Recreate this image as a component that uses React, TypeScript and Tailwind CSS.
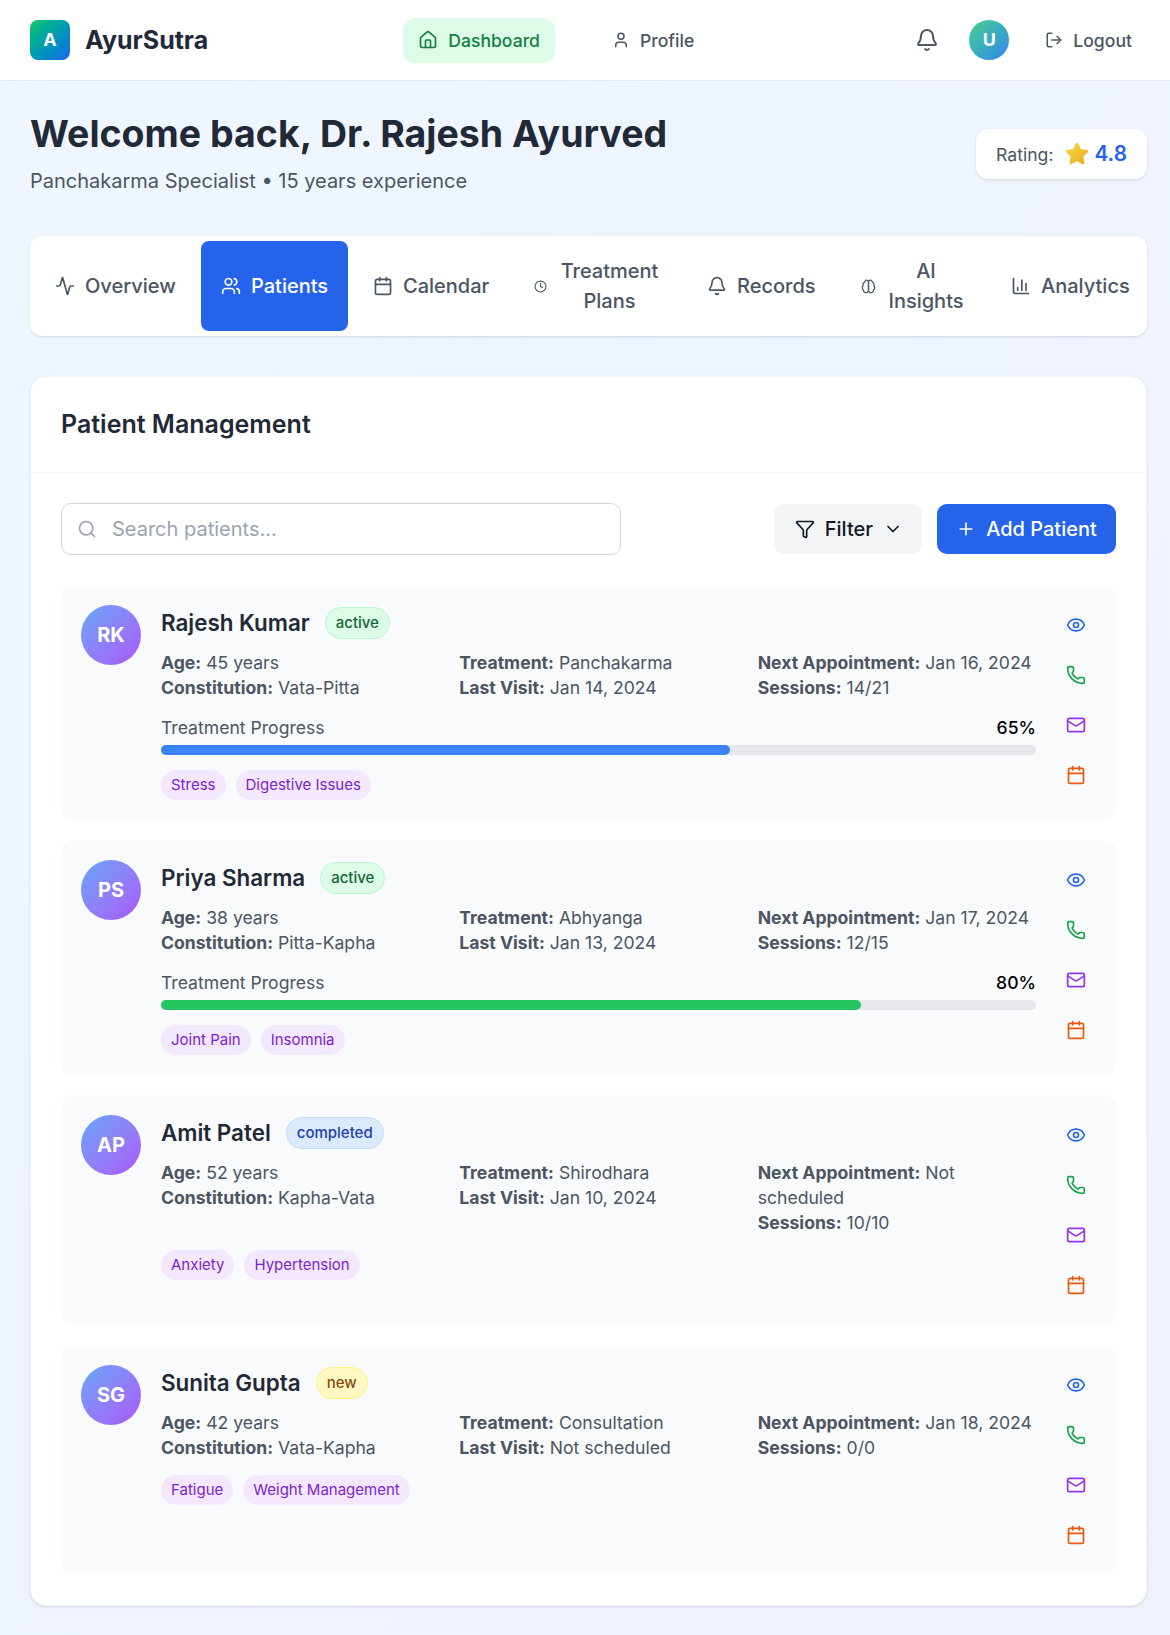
import { Home, User, Bell, LogOut, Activity, Users, Calendar, Clock, BarChart3, Search, Filter, ChevronDown, Plus, Eye, Phone, Mail } from "lucide-react";

function BrainIcon({ size, className }: { size: number; className?: string }) {
  return (
    <svg width={size} height={size} viewBox="0 0 24 24" fill="none" stroke="currentColor" strokeWidth="2" strokeLinecap="round" strokeLinejoin="round" className={className}>
      <path d="M12 5a3 3 0 1 0-5.997.125 4 4 0 0 0-2.526 5.77 4 4 0 0 0 .556 6.588A4 4 0 1 0 12 18Z" />
      <path d="M12 5a3 3 0 1 1 5.997.125 4 4 0 0 1 2.526 5.77 4 4 0 0 1-.556 6.588A4 4 0 1 1 12 18Z" />
    </svg>
  );
}

const tabs = [
  { label: "Overview", Icon: Activity, size: 20, w: "w-[161px]", tw: "" },
  { label: "Patients", Icon: Users, size: 20, w: "w-[147px]", tw: "", active: true },
  { label: "Calendar", Icon: Calendar, size: 20, w: "w-[156px]", tw: "" },
  { label: "Treatment Plans", Icon: Clock, size: 13, w: "w-[168px]", tw: "w-[105px]" },
  { label: "Records", Icon: Bell, size: 20, w: "w-[149px]", tw: "" },
  { label: "AI Insights", Icon: BrainIcon, size: 15, w: "w-[145px]", tw: "w-[80px]" },
  { label: "Analytics", Icon: BarChart3, size: 20, w: "w-[151px]", tw: "" },
];

const patients = [
  { initials: "RK", name: "Rajesh Kumar", status: "active", age: "45 years", constitution: "Vata-Pitta", treatment: "Panchakarma", last: "Jan 14, 2024", next: "Jan 16, 2024", sessions: "14/21", progress: 65, bar: "bg-[#3b82f6]", tags: ["Stress", "Digestive Issues"] },
  { initials: "PS", name: "Priya Sharma", status: "active", age: "38 years", constitution: "Pitta-Kapha", treatment: "Abhyanga", last: "Jan 13, 2024", next: "Jan 17, 2024", sessions: "12/15", progress: 80, bar: "bg-[#22c55e]", tags: ["Joint Pain", "Insomnia"] },
  { initials: "AP", name: "Amit Patel", status: "completed", age: "52 years", constitution: "Kapha-Vata", treatment: "Shirodhara", last: "Jan 10, 2024", next: "Not scheduled", sessions: "10/10", progress: 0, bar: "", tags: ["Anxiety", "Hypertension"] },
  { initials: "SG", name: "Sunita Gupta", status: "new", age: "42 years", constitution: "Vata-Kapha", treatment: "Consultation", last: "Not scheduled", next: "Jan 18, 2024", sessions: "0/0", progress: 0, bar: "", tags: ["Fatigue", "Weight Management"] },
];

const badge: Record<string, string> = {
  active: "bg-[#dcfce7] text-[#166534] border-[#bbf7d0]",
  completed: "bg-[#dbeafe] text-[#1e40af] border-[#bfdbfe]",
  new: "bg-[#fef9c3] text-[#854d0e] border-[#fef08a]",
};

function Info({ k, v }: { k: string; v: string }) {
  return (
    <div>
      <span className="font-bold">{k}:</span> {v}
    </div>
  );
}

function PatientCard({ p }: { p: (typeof patients)[number] }) {
  return (
    <div className="flex gap-5 rounded-xl bg-[#f9fafb] p-5">
      <div className="flex h-[60px] w-[60px] shrink-0 items-center justify-center rounded-full bg-gradient-to-br from-[#60a5fa] to-[#a855f7] text-[20px] font-bold text-white">
        {p.initials}
      </div>
      <div className="min-w-0 flex-1">
        <div className="mb-[10px] flex h-[35px] items-center gap-[15px]">
          <h3 className="text-[22.4px] leading-[35px] font-semibold text-[#1f2937]">{p.name}</h3>
          <span className={`rounded-full border px-2.5 text-[15px] leading-[30px] font-medium ${badge[p.status]}`}>{p.status}</span>
        </div>
        <div className="mb-[15px] grid grid-cols-3 gap-5 text-[17.6px] leading-[25px] text-[#4b5563]">
          <div>
            <Info k="Age" v={p.age} />
            <Info k="Constitution" v={p.constitution} />
          </div>
          <div>
            <Info k="Treatment" v={p.treatment} />
            <Info k="Last Visit" v={p.last} />
          </div>
          <div>
            <Info k="Next Appointment" v={p.next} />
            <Info k="Sessions" v={p.sessions} />
          </div>
        </div>
        {p.progress > 0 && (
          <div className="mb-[15px]">
            <div className="mb-[5px] flex justify-between text-[17.6px] leading-[25px]">
              <span className="text-[#4b5563]">Treatment Progress</span>
              <span className="font-medium text-black">{p.progress}%</span>
            </div>
            <div className="h-2.5 rounded-full bg-[#e5e7eb]">
              <div className={`h-2.5 rounded-full ${p.bar}`} style={{ width: `${p.progress}%` }} />
            </div>
          </div>
        )}
        <div className="flex gap-2.5">
          {p.tags.map((t) => (
            <span key={t} className="rounded-full bg-[#f3e8ff] px-2.5 text-[15px] leading-[30px] text-[#7e22ce]">{t}</span>
          ))}
        </div>
      </div>
      <div className="flex shrink-0 flex-col gap-2.5">
        <span className="p-2.5 text-[#2563eb]"><Eye size={20} /></span>
        <span className="p-2.5 text-[#16a34a]"><Phone size={20} /></span>
        <span className="p-2.5 text-[#9333ea]"><Mail size={20} /></span>
        <span className="p-2.5 text-[#ea580c]"><Calendar size={20} /></span>
      </div>
    </div>
  );
}

export default function App() {
  return (
    <div className="min-h-[1635px] bg-gradient-to-br from-[#eff6ff] to-[#eef2ff] font-['Inter',sans-serif] text-[16px] leading-[1.6]">
      <header className="flex h-[81px] items-center justify-between border-b border-[#e5e7eb] bg-white pr-[23px] pl-[30px]">
        <div className="flex items-center gap-[15px]">
          <div className="flex h-10 w-10 items-center justify-center rounded-lg bg-gradient-to-br from-[#22c55e] to-[#2563eb] text-[18px] font-bold text-white">A</div>
          <span className="text-[25px] font-bold text-[#1f2937]">AyurSutra</span>
        </div>
        <nav className="ml-[9px] flex items-center gap-[22px]">
          <a className="flex h-[45px] items-center gap-2.5 rounded-xl bg-[#dcfce7] px-[15px] pt-[2px] text-[17.6px] font-medium text-[#15803d]">
            <Home size={20} className="-mt-[2px]" /> Dashboard
          </a>
          <a className="flex h-[45px] items-center gap-2.5 px-[35px] pt-[2px] text-[17.6px] font-medium text-[#4b5563]">
            <User size={18} className="-mt-[2px]" /> Profile
          </a>
        </nav>
        <div className="flex items-center">
          <Bell size={24} className="mr-[30px] text-[#4b5563]" />
          <div className="mr-[21px] flex h-10 w-10 items-center justify-center rounded-full bg-gradient-to-br from-[#4ad08a] to-[#3b82e8] text-[18px] font-bold text-white">U</div>
          <a className="flex items-center gap-2.5 px-[15px] pt-[2px] text-[17.6px] font-medium text-[#4b5563]">
            <LogOut size={18} className="-mt-[2px]" /> Logout
          </a>
        </div>
      </header>

      <main className="pt-[30px] pr-[23px] pl-[30px]">
        <div className="mb-[39px] flex items-center justify-between">
          <div>
            <h1 className="mt-[1px] mb-2.5 text-[37.5px] leading-[44px] font-bold text-[#1f2937]">Welcome back, Dr. Rajesh Ayurved</h1>
            <p className="text-[20px] leading-[31px] text-[#4b5563]">Panchakarma Specialist • 15 years experience</p>
          </div>
          <div className="flex h-[50px] items-center rounded-xl bg-white px-5 shadow-sm">
            <span className="mr-3 pt-[2px] text-[17.6px] text-[#4b5563]">Rating:</span>
            <svg width="24" height="24" viewBox="1 1 22 22" className="mr-[5px]">
              <defs>
                <linearGradient id="star" x1="0" y1="0" x2="1" y2="1">
                  <stop offset="0" stopColor="#f8d44c" />
                  <stop offset="1" stopColor="#e8b020" />
                </linearGradient>
              </defs>
              <path d="M12 3l2.8 5.7 6.2.9-4.5 4.4 1.1 6.2-5.6-3-5.6 3 1.1-6.2L3 9.6l6.2-.9z" fill="url(#star)" stroke="url(#star)" strokeWidth="2.5" strokeLinejoin="round" />
            </svg>
            <span className="text-[20.8px] font-semibold text-[#2563eb]">4.8</span>
          </div>
        </div>

        <div className="mb-10 flex h-[100px] gap-[5px] rounded-xl bg-white p-[5px] shadow-sm">
          {tabs.map(({ label, Icon, size, w, tw, active }) => (
            <button key={label} className={`flex shrink-0 items-center justify-start gap-2.5 rounded-lg pl-5 text-[20px] leading-[29.5px] font-medium ${w} ${active ? "bg-[#2563eb] text-white" : "text-[#4b5563]"}`}>
              <Icon size={size} className="shrink-0" />
              <span className={`pt-[1px] text-center ${tw}`}>{label}</span>
            </button>
          ))}
        </div>

        <section className="rounded-2xl border border-[#f3f4f6] bg-white shadow-sm">
          <div className="border-b border-[#f3f4f6] px-[30px] pt-[25px] pb-[26px]">
            <h2 className="text-[25px] leading-[44px] font-semibold text-[#1f2937]">Patient Management</h2>
          </div>
          <div className="p-[30px]">
            <div className="mb-[30px] flex items-center justify-between">
              <div className="flex h-[52px] w-[560px] items-center gap-[15px] rounded-[10px] border border-[#d1d5db] pr-4 pl-[15px] text-[#9ca3af]">
                <Search size={20} />
                <span className="text-[20px]">Search patients...</span>
              </div>
              <div className="flex gap-[15px]">
                <button className="flex h-[50px] items-center gap-2.5 rounded-[10px] bg-[#f3f4f6] pr-[19px] pl-[21px] text-[20px] font-medium text-[#111827]">
                  <Filter size={20} /> Filter <ChevronDown size={20} />
                </button>
                <button className="flex h-[50px] w-[179px] items-center justify-center gap-2.5 rounded-[10px] bg-[#2563eb] text-[20px] font-medium text-white">
                  <Plus size={20} /> Add Patient
                </button>
              </div>
            </div>
            <div className="flex flex-col gap-5">
              {patients.map((p) => (
                <PatientCard key={p.initials} p={p} />
              ))}
            </div>
          </div>
        </section>
      </main>
    </div>
  );
}
